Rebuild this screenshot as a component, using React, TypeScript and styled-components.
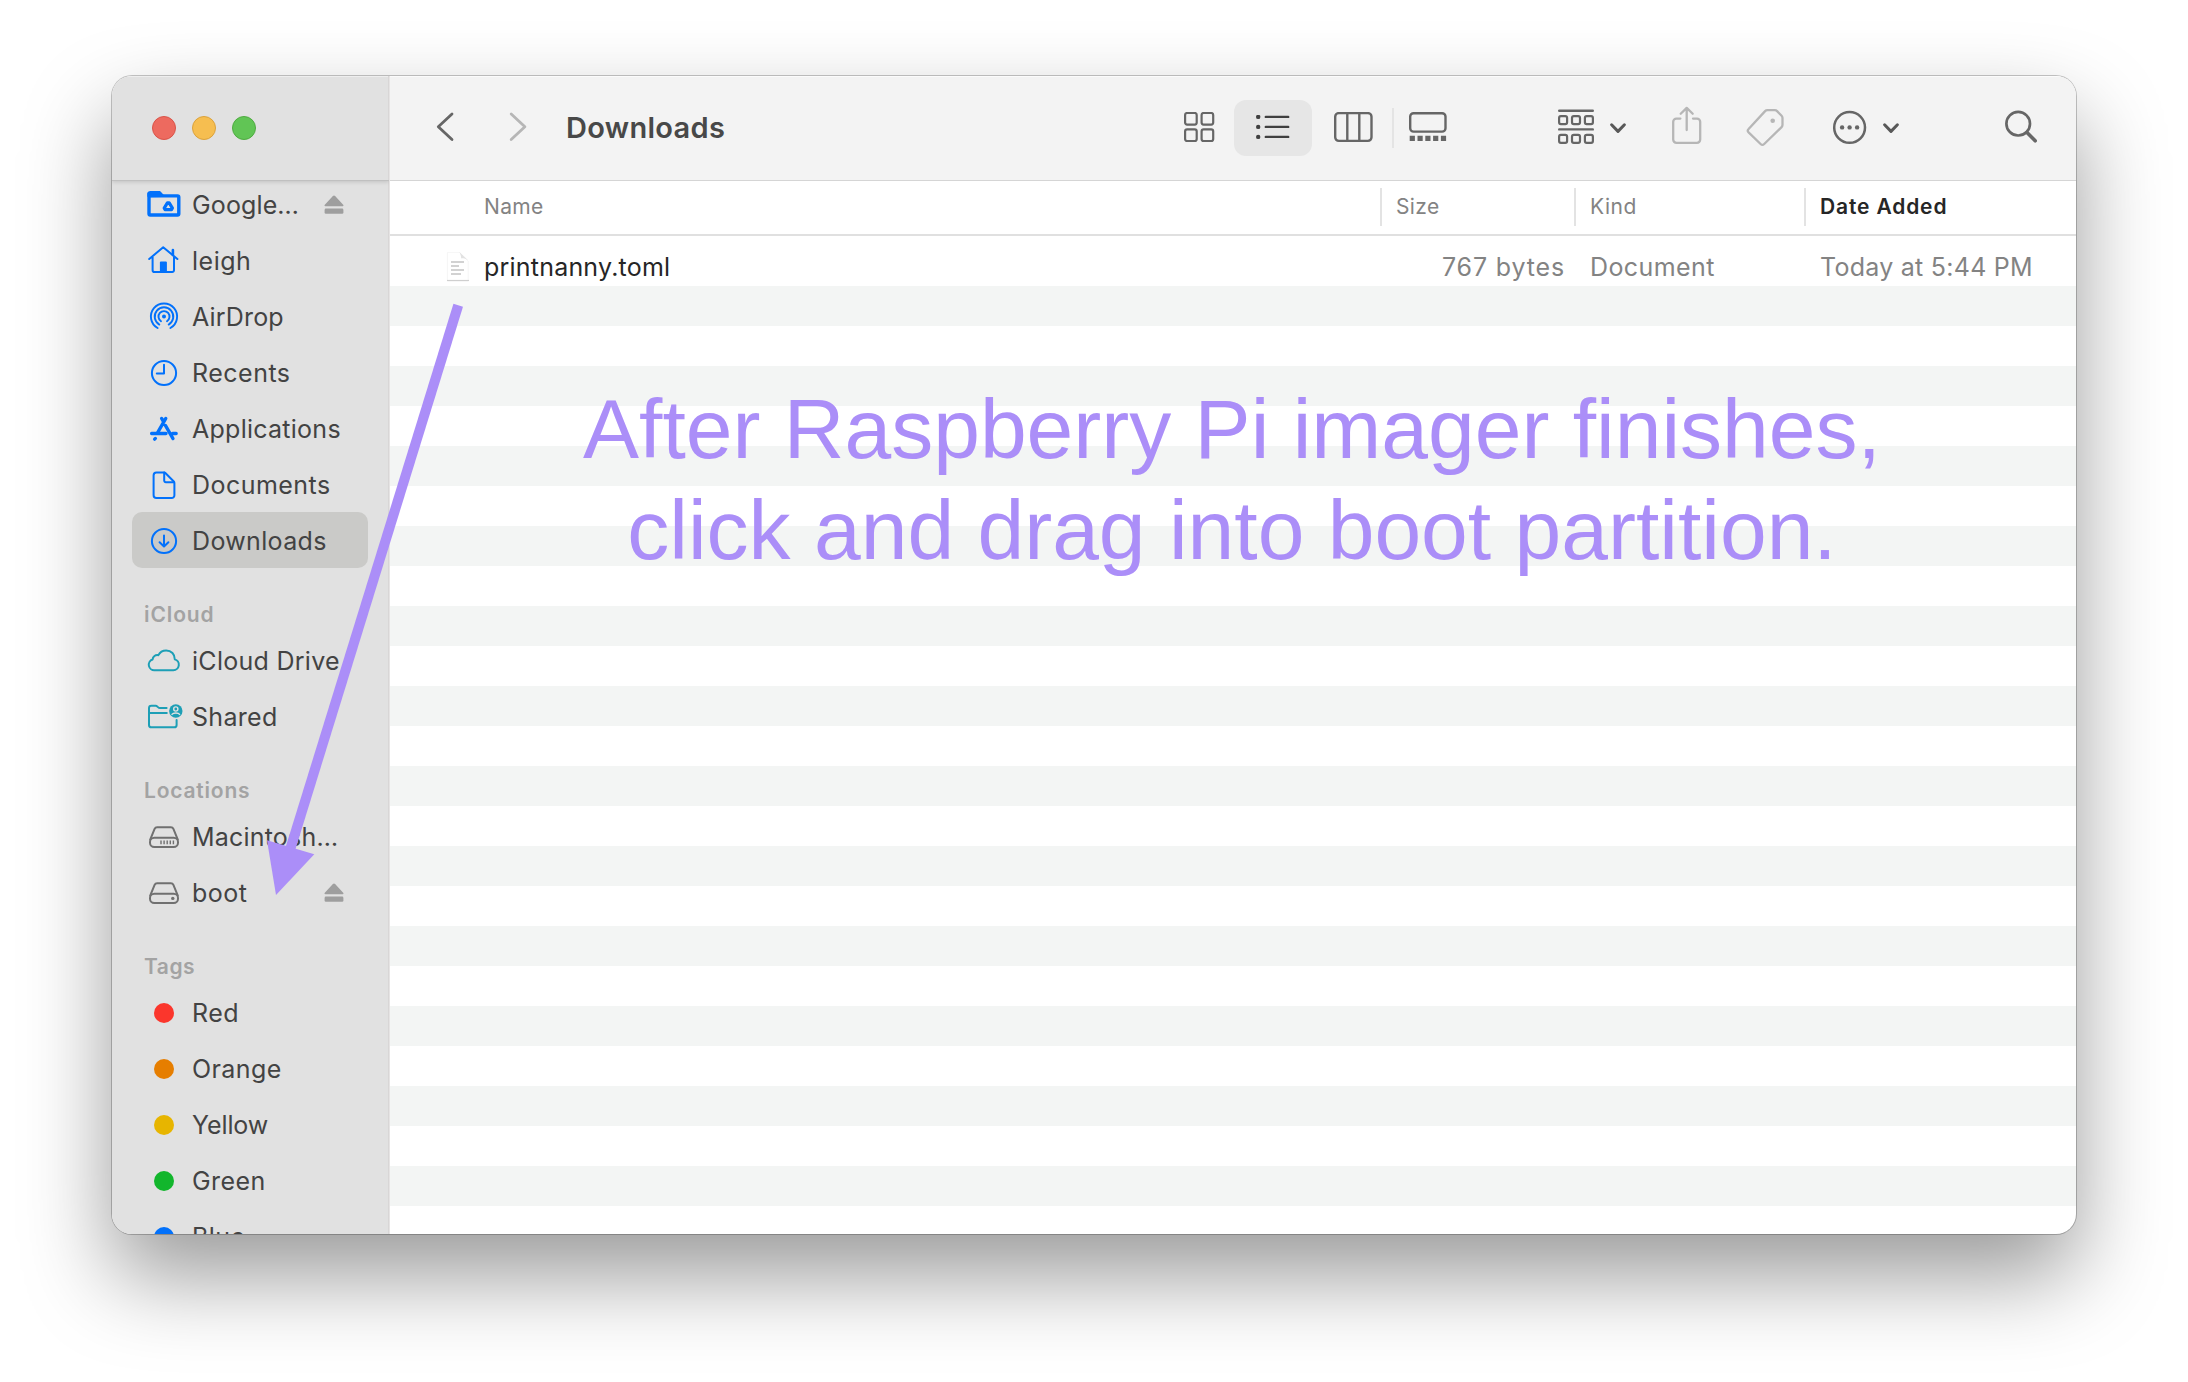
import React from "react";
import styled, { createGlobalStyle } from "styled-components";

const BLUE = "#0271fb";
const TEAL = "#1d9fb6";
const GRAY = "#666666";
const FAINT = "#b6b6b6";
const VIOLET = "#ab8ef8";

const GlobalStyle = createGlobalStyle`
  *, *::before, *::after { box-sizing: border-box; }
  body {
    margin: 0;
    background: #ffffff;
    font-family: Inter, "Liberation Sans", sans-serif;
    overflow: hidden;
  }
  svg { display: block; flex: none; }
`;

const Desktop = styled.div`
  position: relative;
  width: 2188px;
  height: 1382px;
  padding: 76px 112px 148px;
  background: #ffffff;
  overflow: hidden;
`;

const FinderWindow = styled.div`
  display: flex;
  width: 1964px;
  height: 1158px;
  border-radius: 20px;
  overflow: hidden;
  background: #ffffff;
  box-shadow: 0 0 0 1px rgba(0, 0, 0, 0.22), 0 42px 88px rgba(0, 0, 0, 0.4);
`;

/* ---------- sidebar ---------- */

const Sidebar = styled.aside`
  display: flex;
  flex-direction: column;
  flex: none;
  width: 278px;
  background: #e1e1e1;
  border-right: 1px solid #e6e4e4;
  box-shadow: inset -1px 0 0 #d8d6d6, inset 0 1px 0 #eeeeee;
`;

const TitleArea = styled.div`
  display: flex;
  flex: none;
  align-items: center;
  gap: 16px;
  height: 105px;
  padding-left: 40px;
  border-bottom: 1px solid #c0c0c0;
  box-shadow: 0 1px 4px rgba(0, 0, 0, 0.14);
  clip-path: inset(0 0 -8px 0);
`;

const Light = styled.span<{ $fill: string; $edge: string }>`
  width: 24px;
  height: 24px;
  border-radius: 50%;
  background: ${(p) => p.$fill};
  border: 1px solid ${(p) => p.$edge};
`;

const SidebarScroll = styled.nav`
  flex: 1;
  min-height: 0;
  overflow: hidden;
  padding: 0 21px 0 20px;
`;

const SidebarList = styled.div`
  margin-top: -5px;
`;

const SectionTitle = styled.h2<{ $track: number }>`
  height: 64px;
  margin: 0;
  padding: 34px 0 0 12px;
  font-size: 21px;
  font-weight: 600;
  line-height: 25px;
  letter-spacing: ${(p) => p.$track}px;
  color: #a3a3a3;
`;

const SidebarItem = styled.div<{ $active?: boolean }>`
  display: flex;
  align-items: center;
  gap: 8px;
  height: 56px;
  padding: 2px 24px 0 12px;
  border-radius: 10px;
  background: ${(p) => (p.$active ? "#cacac8" : "transparent")};
`;

const IconSlot = styled.span`
  display: flex;
  flex: none;
  align-items: center;
  justify-content: center;
  width: 40px;
  height: 40px;
  margin-top: -2px;
`;

const ItemLabel = styled.span<{ $track: number }>`
  flex: 1;
  white-space: nowrap;
  font-size: 25px;
  line-height: 30px;
  letter-spacing: ${(p) => p.$track}px;
  color: #434343;
`;

const TagDot = styled.span<{ $color: string }>`
  width: 20px;
  height: 20px;
  margin-top: 2px;
  border-radius: 50%;
  background: ${(p) => p.$color};
`;

/* ---------- main ---------- */

const Main = styled.main`
  display: flex;
  flex: 1;
  flex-direction: column;
  min-width: 0;
`;

const Toolbar = styled.header`
  display: flex;
  flex: none;
  align-items: center;
  height: 105px;
  padding: 0 0 0 46px;
  background: #f3f3f3;
  border-bottom: 1px solid #d5d5d5;
  box-shadow: inset 0 1px 0 #fbfbfb;
`;

const NavArrows = styled.div`
  display: flex;
  gap: 53px;
`;

const Title = styled.h1`
  margin: 0 0 1px 37px;
  width: 600px;
  font-size: 29px;
  font-weight: 600;
  line-height: 35px;
  letter-spacing: 0.3px;
  color: #484848;
`;

const ViewSwitch = styled.div`
  display: flex;
  align-items: center;
  margin-left: 16px;
`;

const ViewButton = styled.div<{ $width: number; $after?: number; $selected?: boolean }>`
  display: flex;
  align-items: center;
  justify-content: center;
  width: ${(p) => p.$width}px;
  height: 56px;
  margin-right: ${(p) => p.$after ?? 0}px;
  border-radius: 12px;
  background: ${(p) => (p.$selected ? "#e6e6e6" : "transparent")};
`;

const SwitchDivider = styled.span`
  width: 2px;
  height: 40px;
  background: #e4e4e4;
`;

const Actions = styled.div`
  display: flex;
  align-items: center;
  margin-left: 96px;
`;

const Action = styled.div<{ $after: number }>`
  display: flex;
  align-items: center;
  gap: 15px;
  margin-right: ${(p) => p.$after}px;
`;

const columns = "990px 194px 230px 1fr";

const ColumnHeader = styled.div`
  display: grid;
  flex: none;
  grid-template-columns: ${columns};
  height: 55px;
  border-bottom: 2px solid #e0e0e0;
`;

const HeaderCell = styled.div<{ $indent?: number }>`
  display: flex;
  align-items: flex-start;
  gap: 14px;
  padding: 7px 0 0 ${(p) => p.$indent ?? 0}px;
`;

const CellDivider = styled.span`
  width: 2px;
  height: 38px;
  background: #e3e3e3;
`;

const HeaderText = styled.span<{ $sorted?: boolean; $track: number }>`
  padding-top: 6px;
  font-size: 21px;
  line-height: 25px;
  white-space: nowrap;
  font-weight: ${(p) => (p.$sorted ? 600 : 400)};
  letter-spacing: ${(p) => p.$track}px;
  color: ${(p) => (p.$sorted ? "#262626" : "#838383")};
`;

const Rows = styled.div`
  flex: 1;
  min-height: 0;
  overflow: hidden;
`;

const FileRow = styled.div`
  display: grid;
  grid-template-columns: ${columns};
  height: 50px;
  padding-top: 16px;
  line-height: 30px;
  font-size: 25px;
  white-space: nowrap;
`;

const FileName = styled.div`
  display: flex;
  gap: 14px;
  padding-left: 56px;
  letter-spacing: 0.21px;
  color: #262626;
`;

const FileMeta = styled.div<{ $track: number; $right?: boolean }>`
  padding: ${(p) => (p.$right ? "0 9px 0 0" : "0 0 0 16px")};
  text-align: ${(p) => (p.$right ? "right" : "left")};
  letter-spacing: ${(p) => p.$track}px;
  color: #838383;
`;

const EmptyRow = styled.div`
  height: 40px;
  &:nth-child(even) {
    background: #f3f5f4;
  }
`;

/* ---------- annotation ---------- */

const Annotation = styled.p`
  position: absolute;
  top: 379px;
  left: 532px;
  width: 1400px;
  margin: 0;
  text-align: center;
  font-family: "Liberation Sans", Arial, sans-serif;
  font-size: 84px;
  line-height: 101px;
  color: ${VIOLET};
`;

const ArrowLayer = styled.svg`
  position: absolute;
  top: 290px;
  left: 250px;
`;

/* ---------- sidebar icons ---------- */

const SideSvg = ({ color, width = 2, children }: { color: string; width?: number; children: React.ReactNode }) => (
  <svg width="40" height="40" viewBox="0 0 40 40" fill="none" stroke={color} strokeWidth={width} strokeLinecap="round" strokeLinejoin="round">
    {children}
  </svg>
);

const GoogleDriveIcon = () => (
  <SideSvg color={BLUE} width={3.4}>
    <path d="M5 9.5v20.2a1.3 1.3 0 0 0 1.3 1.3h27.2a1.3 1.3 0 0 0 1.3-1.3V13.2a1.3 1.3 0 0 0-1.3-1.3H5" />
    <path d="M4.6 12V9.6a1.5 1.5 0 0 1 1.5-1.4h9.6l3.2 3.6z" fill={BLUE} strokeWidth="2.4" />
    <path d="M23.4 18.9h1.8l3.2 5.2-.8 1.5h-6.6l-.8-1.5z" strokeWidth="3.2" />
  </SideSvg>
);

const HomeIcon = () => (
  <SideSvg color={BLUE}>
    <path d="M5.2 19 19.2 7.3 33.4 19M8.6 17v13.2a1.8 1.8 0 0 0 1.8 1.8h17.8a1.8 1.8 0 0 0 1.8-1.8V17" />
    <path d="M28.9 10v5" strokeWidth="2.6" />
    <path d="M15.9 32V22.4a1 1 0 0 1 1-1h5a1 1 0 0 1 1 1V32z" fill={BLUE} stroke="none" />
  </SideSvg>
);

const AirDropIcon = () => (
  <SideSvg color={BLUE} width={1.9}>
    <circle cx="20" cy="20.6" r="2" fill={BLUE} stroke="none" />
    <path d="M17 25.2a5.5 5.5 0 1 1 6 0" />
    <path d="M15.3 28.6a9.3 9.3 0 1 1 9.4 0" />
    <path d="M13.6 32a13.1 13.1 0 1 1 12.8 0" />
  </SideSvg>
);

const RecentsIcon = () => (
  <SideSvg color={BLUE}>
    <circle cx="20" cy="21" r="12.1" />
    <path d="M20 12.8V21.6H12.8" />
  </SideSvg>
);

const ApplicationsIcon = () => (
  <SideSvg color={BLUE} width={3.3}>
    <path d="M21.8 10.4 13.6 24.6M17.6 10.4 19.6 13.8M21.4 17.4 29 30.6M11.4 30.4 10.6 31.2M7.6 25.5H22M28.6 25.5h3.6" />
  </SideSvg>
);

const DocumentIcon = () => (
  <SideSvg color={BLUE}>
    <path d="M12.4 8.6h7.8a2 2 0 0 1 1.4.6l8.2 8.3a2 2 0 0 1 .6 1.4v12.3a2.8 2.8 0 0 1-2.8 2.8H12.4a2.8 2.8 0 0 1-2.8-2.8V11.4a2.8 2.8 0 0 1 2.8-2.8z" />
    <path d="M20.2 8.6v8a1.6 1.6 0 0 0 1.6 1.6h8" />
  </SideSvg>
);

const DownloadsIcon = () => (
  <SideSvg color={BLUE}>
    <circle cx="20" cy="21" r="12.1" />
    <path d="M20 15.6v10.6M15.6 22.3l4.4 4.2 4.4-4.2" />
  </SideSvg>
);

const CloudIcon = () => (
  <SideSvg color={TEAL}>
    <path d="M10.9 30.2h18.5a5.5 5.5 0 0 0 1.4-10.8c.2-5-3.6-9-8.6-9-3.6 0-6.4 1.8-7.8 4.8-3-.6-5.6 1.2-5.8 4.3a5.5 5.5 0 0 0 2.3 10.7z" />
  </SideSvg>
);

const SharedIcon = () => (
  <SideSvg color={TEAL}>
    <path d="M32.6 24v4.9a2.4 2.4 0 0 1-2.4 2.4H7.4A2.4 2.4 0 0 1 5 28.9V12.1a2.4 2.4 0 0 1 2.4-2.4h4.3c1.6 0 2.4 2.4 4.2 2.4h6.7M5 17h17.8" />
    <circle cx="31.8" cy="15" r="6.7" fill={TEAL} stroke="none" />
    <circle cx="31.8" cy="13" r="2.1" stroke="#e1e1e1" strokeWidth="1.4" />
    <path d="M28 18.4c1.2-1.8 6.4-1.8 7.6 0" stroke="#e1e1e1" strokeWidth="1.4" />
  </SideSvg>
);

const DriveIcon = ({ internal }: { internal?: boolean }) => (
  <SideSvg color="#707070">
    <path d="M6.2 23.6 10.6 12.9a2.8 2.8 0 0 1 2.6-1.7h13.6a2.8 2.8 0 0 1 2.6 1.7L33.8 23.6" />
    <rect x="6" y="21.8" width="28" height="9.2" rx="4.3" />
    {internal ? (
      <path d="M17 24.6v3.6M20.1 24.6v3.6M23.2 24.6v3.6M26.3 24.6v3.6M29.4 24.6v3.6" strokeWidth="1.4" strokeLinecap="butt" />
    ) : (
      <circle cx="28.8" cy="26.4" r="1.7" fill="#707070" stroke="none" />
    )}
  </SideSvg>
);

const EjectIcon = () => (
  <svg width="20" height="20" viewBox="0 0 20 20" fill="#9e9e9e">
    <path d="M8.9 1.1a1.5 1.5 0 0 1 2.2 0l8.1 8.6c.6.7.3 1.6-.6 1.6H1.4c-.9 0-1.2-.9-.6-1.6z" />
    <rect x=".6" y="13.6" width="18.8" height="5.2" rx="1.3" />
  </svg>
);

/* ---------- toolbar icons ---------- */

const Chevron = ({ forward }: { forward?: boolean }) => (
  <svg width="20" height="32" viewBox="0 0 20 32" fill="none" stroke={forward ? FAINT : GRAY} strokeWidth="2.8" strokeLinecap="round" strokeLinejoin="round">
    <path d={forward ? "M2.2 2 15.9 14.8 2.2 27.6" : "M16 2 2.3 14.8 16 27.6"} />
  </svg>
);

const GridIcon = () => (
  <svg width="32" height="32" viewBox="0 0 32 32" fill="none" stroke={GRAY} strokeWidth="2.2">
    <rect x="2.1" y="1" width="11.6" height="11.6" rx="2" />
    <rect x="18.6" y="1" width="11.6" height="11.6" rx="2" />
    <rect x="2.1" y="17.4" width="11.6" height="11.6" rx="2" />
    <rect x="18.6" y="17.4" width="11.6" height="11.6" rx="2" />
  </svg>
);

const ListIcon = () => (
  <svg width="34" height="26" viewBox="0 0 34 26" stroke="#404040" strokeWidth="2.4" strokeLinecap="round">
    <path d="M9.8 1.9h22.4M9.8 11.9h22.4M9.8 21.9h22.4" />
    <g fill="#404040" stroke="none">
      <circle cx="2.2" cy="1.9" r="2.2" />
      <circle cx="2.2" cy="11.9" r="2.2" />
      <circle cx="2.2" cy="21.9" r="2.2" />
    </g>
  </svg>
);

const ColumnsIcon = () => (
  <svg width="44" height="32" viewBox="0 0 44 32" fill="none" stroke={GRAY} strokeWidth="2.4">
    <rect x="5.2" y="1.1" width="36.3" height="27.8" rx="3.6" />
    <path d="M17.3 1.1v27.8M29.3 1.1v27.8" />
  </svg>
);

const GalleryIcon = () => (
  <svg width="38" height="32" viewBox="0 0 38 32" fill="none" stroke={GRAY} strokeWidth="2.4">
    <rect x="1.2" y="1.2" width="35.3" height="18.4" rx="3.4" />
    <path d="M.7 26.3h36.4" strokeWidth="5.2" strokeDasharray="5.2 2.6" strokeLinecap="butt" />
  </svg>
);

const GroupIcon = () => (
  <svg width="36" height="38" viewBox="0 0 36 38" fill="none" stroke={GRAY} strokeWidth="2.2">
    <path d="M1.2 1.7h33.6M1.2 20.4h33.6" strokeLinecap="round" strokeWidth="2.4" />
    {[7.1, 25.9].map((y) =>
      [1.1, 14, 26.9].map((x) => <rect key={`${x}-${y}`} x={x} y={y} width="8" height="8" rx="1.8" />)
    )}
  </svg>
);

const DownIcon = () => (
  <svg width="18" height="12" viewBox="0 0 18 12" fill="none" stroke="#585858" strokeWidth="3" strokeLinecap="round" strokeLinejoin="round">
    <path d="M2.6 2.8 9 9.4l6.4-6.6" />
  </svg>
);

const ShareIcon = () => (
  <svg width="32" height="44" viewBox="0 0 32 44" fill="none" stroke={FAINT} strokeWidth="2.3" strokeLinecap="round" strokeLinejoin="round">
    <path d="M9.4 12.6H5.4a3.2 3.2 0 0 0-3.2 3.2v17.8a3.2 3.2 0 0 0 3.2 3.2h20.6a3.2 3.2 0 0 0 3.2-3.2V15.8a3.2 3.2 0 0 0-3.2-3.2H22" />
    <path d="M15.7 24V2.2M9.7 7.8 15.7 1.9l6 5.9" />
  </svg>
);

const TagIcon = () => (
  <svg width="40" height="40" viewBox="0 0 40 40" fill="none" stroke={FAINT} strokeWidth="2.3" strokeLinejoin="round">
    <path d="M22.4 2.2h7.4c.9 0 1.7.3 2.3.9l4.5 4.6c.6.6.9 1.4.9 2.3v6.8c0 .9-.3 1.7-.9 2.3L19.2 36c-1.2 1.2-2.4 1.2-3.6 0L3.6 24.4c-1.1-1.1-1.1-2.3 0-3.4L20.1 3.1c.6-.6 1.4-.9 2.3-.9z" />
    <circle cx="27.7" cy="12.8" r="2.3" fill={FAINT} stroke="none" />
  </svg>
);

const MoreIcon = () => (
  <svg width="36" height="36" viewBox="0 0 36 36" fill="none" stroke={GRAY} strokeWidth="2.5">
    <circle cx="18.6" cy="17.4" r="15.4" />
    <g fill={GRAY} stroke="none">
      <circle cx="11.1" cy="17.4" r="2.2" />
      <circle cx="18.6" cy="17.4" r="2.2" />
      <circle cx="26.1" cy="17.4" r="2.2" />
    </g>
  </svg>
);

const SearchIcon = () => (
  <svg width="36" height="36" viewBox="0 0 36 36" fill="none" stroke={GRAY} strokeLinecap="round">
    <circle cx="15.2" cy="13.7" r="11.8" strokeWidth="2.7" />
    <path d="M24 22.6l8.2 8.2" strokeWidth="3.6" />
  </svg>
);

/* ---------- data ---------- */

type Entry = { label: string; track: number; icon: React.ReactNode; eject?: boolean; active?: boolean };
type Section = { title?: string; track?: number; entries: Entry[] };

const sections: Section[] = [
  {
    entries: [
      { label: "Google…", track: 0.13, icon: <GoogleDriveIcon />, eject: true },
      { label: "leigh", track: 0.5, icon: <HomeIcon /> },
      { label: "AirDrop", track: 0.18, icon: <AirDropIcon /> },
      { label: "Recents", track: 0.5, icon: <RecentsIcon /> },
      { label: "Applications", track: 0.26, icon: <ApplicationsIcon /> },
      { label: "Documents", track: 0.45, icon: <DocumentIcon /> },
      { label: "Downloads", track: 0.34, icon: <DownloadsIcon />, active: true },
    ],
  },
  {
    title: "iCloud",
    track: 0.9,
    entries: [
      { label: "iCloud Drive", track: 0.28, icon: <CloudIcon /> },
      { label: "Shared", track: 0.31, icon: <SharedIcon /> },
    ],
  },
  {
    title: "Locations",
    track: 0.79,
    entries: [
      { label: "Macintosh…", track: 0.2, icon: <DriveIcon internal /> },
      { label: "boot", track: 0.5, icon: <DriveIcon />, eject: true },
    ],
  },
  {
    title: "Tags",
    track: 0.5,
    entries: [
      { label: "Red", track: 0.5, icon: <TagDot $color="#fb362c" /> },
      { label: "Orange", track: 0.4, icon: <TagDot $color="#e67e00" /> },
      { label: "Yellow", track: -0.1, icon: <TagDot $color="#e7b500" /> },
      { label: "Green", track: 0.45, icon: <TagDot $color="#12b62c" /> },
      { label: "Blue", track: 0.4, icon: <TagDot $color="#0271fb" /> },
    ],
  },
];

export default function App() {
  return (
    <>
      <GlobalStyle />
      <Desktop>
        <FinderWindow>
          <Sidebar>
            <TitleArea>
              <Light $fill="#ed6a5f" $edge="#d95449" />
              <Light $fill="#f6be50" $edge="#dba23c" />
              <Light $fill="#61c555" $edge="#4fab41" />
            </TitleArea>
            <SidebarScroll>
              <SidebarList>
                {sections.map((section, i) => (
                  <React.Fragment key={i}>
                    {section.title && <SectionTitle $track={section.track ?? 0}>{section.title}</SectionTitle>}
                    {section.entries.map((entry) => (
                      <SidebarItem key={entry.label} $active={entry.active}>
                        <IconSlot>{entry.icon}</IconSlot>
                        <ItemLabel $track={entry.track}>{entry.label}</ItemLabel>
                        {entry.eject && <EjectIcon />}
                      </SidebarItem>
                    ))}
                  </React.Fragment>
                ))}
              </SidebarList>
            </SidebarScroll>
          </Sidebar>

          <Main>
            <Toolbar>
              <NavArrows>
                <Chevron />
                <Chevron forward />
              </NavArrows>
              <Title>Downloads</Title>
              <ViewSwitch>
                <ViewButton $width={34} $after={18}>
                  <GridIcon />
                </ViewButton>
                <ViewButton $width={78} $selected>
                  <ListIcon />
                </ViewButton>
                <ViewButton $width={80}>
                  <ColumnsIcon />
                </ViewButton>
                <SwitchDivider />
                <ViewButton $width={68}>
                  <GalleryIcon />
                </ViewButton>
              </ViewSwitch>
              <Actions>
                <Action $after={44}>
                  <GroupIcon />
                  <DownIcon />
                </Action>
                <Action $after={42}>
                  <ShareIcon />
                </Action>
                <Action $after={46}>
                  <TagIcon />
                </Action>
                <Action $after={103}>
                  <MoreIcon />
                  <DownIcon />
                </Action>
                <SearchIcon />
              </Actions>
            </Toolbar>

            <ColumnHeader>
              <HeaderCell $indent={94}>
                <HeaderText $track={0.33}>Name</HeaderText>
              </HeaderCell>
              <HeaderCell>
                <CellDivider />
                <HeaderText $track={0.38}>Size</HeaderText>
              </HeaderCell>
              <HeaderCell>
                <CellDivider />
                <HeaderText $track={0.5}>Kind</HeaderText>
              </HeaderCell>
              <HeaderCell>
                <CellDivider />
                <HeaderText $sorted $track={0.85}>
                  Date Added
                </HeaderText>
              </HeaderCell>
            </ColumnHeader>

            <Rows>
              <FileRow>
                <FileName>
                  <svg width="24" height="32" viewBox="0 0 24 32" fill="none">
                    <path d="M1.4.3h12l8.8 8.6V28.9H1.4z" fill="#ffffff" stroke="#f5f5f5" strokeWidth="1" />
                    <path d="M1.4 0h12c1.4 3.4 2 5 1.6 6.4 2.4-.2 5 .2 7.2 2.2L13.4 0z" fill="#e2e2e2" />
                    <path d="M1 28.5h22" stroke="#cfcfcf" strokeWidth="1.2" />
                    <path d="M5 10h13M5 14h8M5 18h13M5 22h10" stroke="#c4c4c4" strokeWidth="1.7" />
                  </svg>
                  <span>printnanny.toml</span>
                </FileName>
                <FileMeta $right $track={0.85}>767 bytes</FileMeta>
                <FileMeta $track={0.4}>Document</FileMeta>
                <FileMeta $track={0.26}>Today at 5:44 PM</FileMeta>
              </FileRow>
              {Array.from({ length: 24 }, (_, i) => (
                <EmptyRow key={i} />
              ))}
            </Rows>
          </Main>
        </FinderWindow>

        <Annotation>
          After Raspberry Pi imager finishes,
          <br />
          click and drag into boot partition.
        </Annotation>
        <ArrowLayer width="230" height="620" viewBox="0 0 230 620">
          <path d="M208.2 15.3 40.6 558" stroke={VIOLET} strokeWidth="10" />
          <path d="M17 550.3 64.3 564.3 26 605z" fill={VIOLET} />
        </ArrowLayer>
      </Desktop>
    </>
  );
}
